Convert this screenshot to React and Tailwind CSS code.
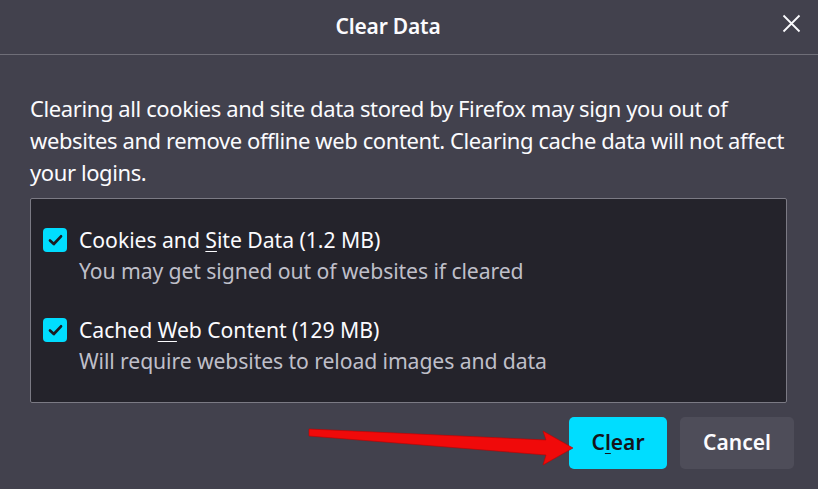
import React from "react";

function Check() {
  return (
    <div className="w-[24px] h-[24px] rounded-[4px] bg-[#00ddff] flex items-center justify-center shrink-0">
      <svg width="15" height="12" viewBox="0 0 15 12" fill="none">
        <path d="M2 6.5 L5.8 10 L13 2.3" stroke="#1c1b22" strokeWidth="2.7" strokeLinecap="round" strokeLinejoin="round" />
      </svg>
    </div>
  );
}

export default function App() {
  return (
    <div
      className="relative w-[818px] h-[489px] bg-[#42414d] text-[#fbfbfe] overflow-hidden"
      style={{ fontFamily: '"Noto Sans", "Open Sans", sans-serif' }}
    >
      <div className="h-[55px] border-b border-[#6f6e78] flex items-center justify-center pr-[42px] relative">
        <span className="text-[21px] font-semibold tracking-[-0.2px]">Clear Data</span>
        <svg className="absolute left-[782px] top-[14px]" width="19" height="19" viewBox="0 0 19 19">
          <path d="M1.5 1.5 L17.5 17.5 M17.5 1.5 L1.5 17.5" stroke="#fbfbfe" strokeWidth="1.8" />
        </svg>
      </div>
      <div className="px-[30px] pt-[37px]">
        <p className="text-[22px] leading-[32px] tracking-[-0.4px]">
          Clearing all cookies and site data stored by Firefox may sign you out of websites and remove offline web content. Clearing cache data will not affect your logins.
        </p>
        <div className="mt-[10px] w-[757px] h-[205px] bg-[#24232b] border border-[#7b7a84] rounded-[2px] pl-[12px] pt-[25px] flex flex-col gap-[28px]">
          <div className="flex flex-col">
            <div className="flex items-center gap-[12px] h-[31px]">
              <Check />
              <span className="text-[21.2px] tracking-[-0.05px]">
                Cookies and <span className="underline underline-offset-[3px] decoration-1">S</span>ite Data (1.2 MB)
              </span>
            </div>
            <div className="pl-[36px] h-[31px] flex items-center text-[21.2px] tracking-[-0.1px] text-[#bfbfc9]">
              You may get signed out of websites if cleared
            </div>
          </div>
          <div className="flex flex-col">
            <div className="flex items-center gap-[12px] h-[31px]">
              <Check />
              <span className="text-[21.2px] tracking-[-0.05px]">
                Cached <span className="underline underline-offset-[3px] decoration-1">W</span>eb Content (129 MB)
              </span>
            </div>
            <div className="pl-[36px] h-[31px] flex items-center text-[21.2px] tracking-[-0.1px] text-[#bfbfc9]">
              Will require websites to reload images and data
            </div>
          </div>
        </div>
      </div>
      <div className="flex justify-end gap-[13px] pr-[24px] mt-[14px]">
        <button className="w-[98px] h-[52px] rounded-[5px] bg-[#00ddff] text-[#15141a] text-[21px] font-semibold">
          C<span className="underline underline-offset-[3px] decoration-1">l</span>ear
        </button>
        <button className="w-[114px] h-[52px] rounded-[5px] bg-[#4e4d59] text-[#fbfbfe] text-[21px] font-semibold">
          Cancel
        </button>
      </div>
      <svg className="absolute left-0 top-0 pointer-events-none" width="818" height="489" viewBox="0 0 818 489">
        <polygon
          points="309,429 546,440 543,431 573,448 543,465 546,455 309,436"
          fill="#f00a0a"
          stroke="#c00000"
          strokeWidth="0.6"
          strokeLinejoin="round"
        />
      </svg>
    </div>
  );
}
